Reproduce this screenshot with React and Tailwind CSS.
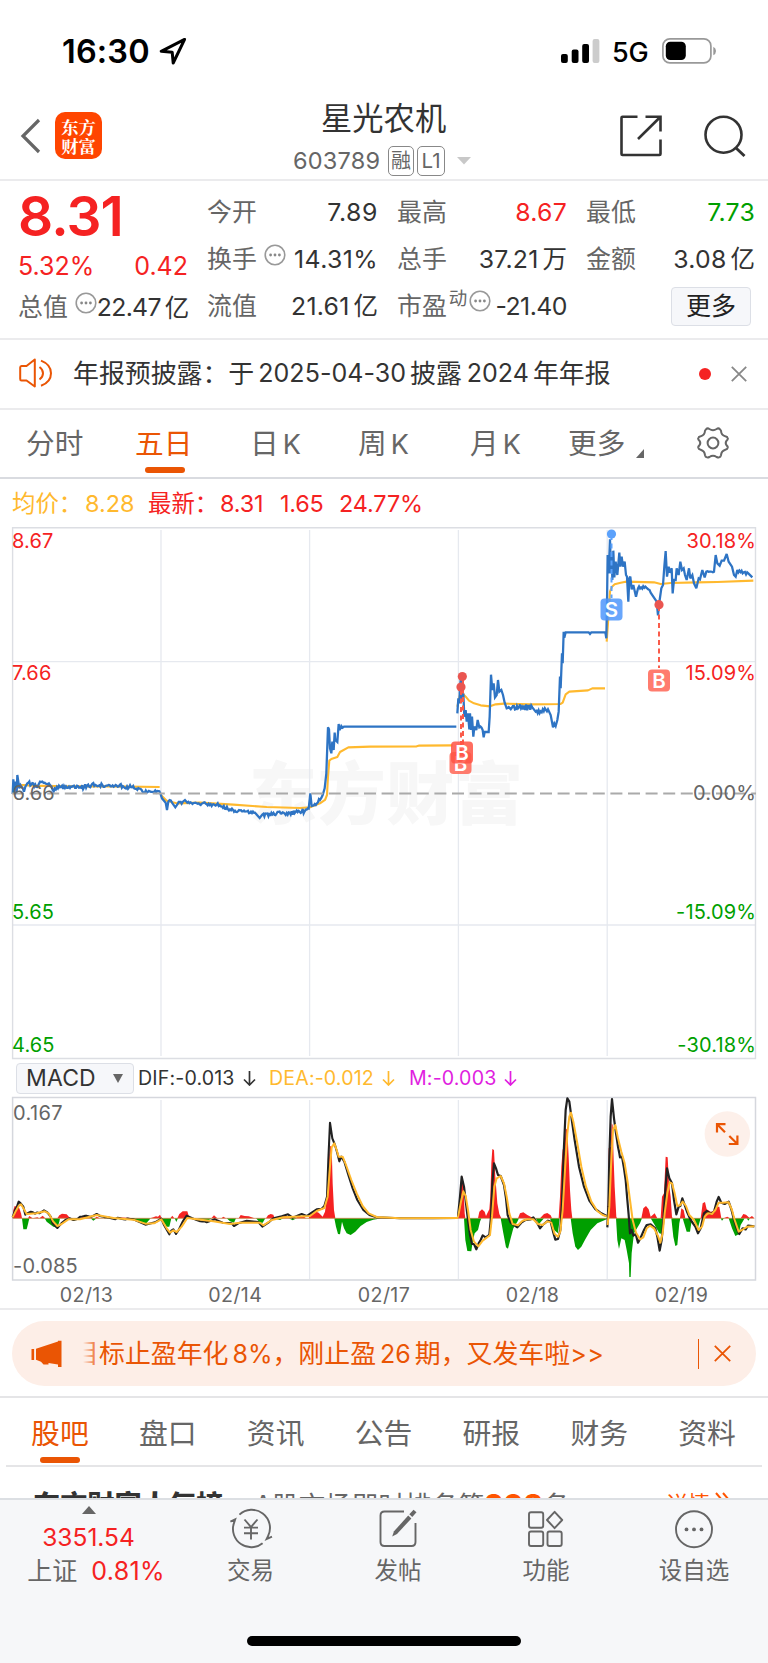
import React from "react";

const rnd = (seed) => {
  let s = seed;
  return () => {
    s = (s * 16807) % 2147483647;
    return s / 2147483647 - 0.5;
  };
};

// Adds tick noise between anchor points: each anchor is [x, y, amplitude].
const ticks = (anchors, seed, step = 3) => {
  const r = rnd(seed);
  const out = [];
  for (let i = 0; i < anchors.length - 1; i++) {
    const [x0, y0, a = 0] = anchors[i];
    const [x1, y1] = anchors[i + 1];
    out.push(`${x0},${y0}`);
    if (a > 0) {
      const n = Math.floor((x1 - x0) / step);
      for (let k = 1; k < n; k++) {
        const t = k / n;
        out.push(`${(x0 + (x1 - x0) * t).toFixed(1)},${(y0 + (y1 - y0) * t + r() * 2 * a).toFixed(1)}`);
      }
    }
  }
  const last = anchors[anchors.length - 1];
  out.push(`${last[0]},${last[1]}`);
  return out.join(" ");
};

const priceA = ticks(
  [
    [38, 402], [40, 358], [43, 400], [47, 365], [50, 398], [52, 345], [55, 365], [58, 385, 12], [72, 395], [76, 380], [82, 370, 7], [115, 375, 5], [120, 365, 2],
    [134, 368, 5], [150, 375, 5], [158, 390, 7], [180, 382, 5], [240, 382, 7], [286, 375, 5], [350, 377, 6], [415, 384, 4], [428, 396, 4], [478, 394], [481, 400],
    [486, 415], [497, 428], [501, 450], [505, 425, 6], [516, 428], [526, 442], [533, 432, 5], [548, 426], [555, 420], [562, 428, 3], [590, 430, 6], [650, 434, 5],
    [690, 448, 6], [705, 452, 4], [765, 458], [779, 474], [787, 464, 6], [860, 459, 7], [905, 456, 8], [926, 446], [931, 400], [935, 438, 8], [960, 420, 6],
    [968, 405], [974, 385], [979, 340], [984, 202], [987, 208], [990, 265], [994, 280], [997, 245], [1001, 270], [1004, 218], [1006, 240], [1012, 246], [1016, 192],
    [1019, 210], [1024, 198], [1028, 203], [1032, 200], [1369, 200],
  ],
  77, 3
);
const avgA = "38,374 100,377 200,379 330,379 479,381 M482,404 500,422 530,430 600,428 700,434 800,441 900,444 930,442 960,430 975,420 981,405 984,350 988,302 994,297 1012,291 1020,276 1045,262 1110,260 1250,259 1256,257 1358,256";
const priceB = ticks(
  [
    [220, 580], [223, 535], [226, 550], [228, 500], [231, 470], [234, 545], [238, 520], [241, 590], [245, 570], [248, 605], [252, 580], [256, 628], [258, 580],
    [261, 630], [264, 590], [268, 650], [271, 620], [277, 630], [281, 600], [286, 622, 5], [296, 630], [299, 652], [302, 636], [314, 636], [317, 590],
    [321, 464], [325, 510], [329, 490], [333, 532], [338, 525], [342, 480], [346, 515], [352, 510], [357, 525], [362, 548], [368, 565, 6], [405, 562, 10],
    [445, 562], [455, 575, 7], [470, 574, 8], [492, 568], [500, 585], [507, 622], [511, 610], [515, 618], [520, 600], [524, 575], [528, 470], [530, 505],
    [534, 400], [536, 430], [539, 335], [541, 353], [545, 337], [614, 337], [618, 342], [622, 337], [664, 337], [667, 355], [669, 250], [671, 105], [674, 160],
    [678, 58], [681, 160], [683, 95], [685, 180], [688, 92], [691, 172], [695, 125], [700, 165], [706, 98], [709, 140], [713, 110], [717, 140], [722, 125],
    [726, 165], [729, 170], [733, 245], [736, 175], [739, 170], [743, 208], [748, 195], [756, 230], [762, 205, 8], [784, 200, 7], [800, 218], [815, 240],
    [818, 245], [822, 286], [827, 240], [832, 205], [837, 195], [841, 140], [845, 93], [849, 170], [854, 140], [857, 158], [863, 145], [866, 220], [870, 180],
    [875, 180], [878, 145], [884, 165], [889, 125], [894, 150], [899, 145], [903, 165], [908, 180], [915, 145], [919, 175], [925, 165], [930, 190], [937, 205],
    [944, 175], [948, 178], [955, 150], [962, 172], [967, 155, 3], [990, 155], [995, 105], [1000, 130], [1007, 137], [1013, 122], [1020, 122], [1028, 102],
    [1034, 125], [1044, 140], [1050, 165], [1055, 170], [1060, 150, 8], [1076, 160, 5], [1093, 160], [1105, 172],
  ],
  31, 3
);
const avgB = "220,560 228,525 236,521 245,530 255,542 270,550 290,556 318,559 335,553 360,551 440,553 530,552 536,548 545,523 556,515 612,511 625,505 663,505 M668,365 674,280 678,215 684,200 692,193 710,188 725,185 810,187 830,192 860,189 940,187 1000,186 1108,182";

const difA = ticks(
  [
    [38, 502], [45, 480], [50, 472], [56, 455], [62, 460], [70, 470], [76, 494], [86, 488, 3], [118, 490], [132, 481], [142, 487], [152, 500], [158, 520], [172, 534], [184, 520],
    [196, 510], [210, 505], [220, 510, 3], [240, 500, 3], [275, 500], [290, 492], [300, 498, 2], [340, 506, 3], [400, 508], [436, 524], [465, 517], [484, 506], [492, 525], [508, 553], [514, 542], [520, 538],
    [528, 552], [536, 540], [548, 515], [560, 497], [575, 504, 3], [620, 517], [645, 508], [668, 518], [695, 520], [702, 528], [715, 520], [740, 512], [775, 516], [787, 530], [805, 518], [820, 505],
    [845, 499], [864, 493], [878, 503], [905, 492], [920, 498], [935, 488], [950, 478], [965, 476], [973, 468], [981, 440], [985, 330], [990, 218], [997, 265], [1005, 285], [1012, 310], [1018, 334], [1024, 320],
    [1033, 335], [1045, 375], [1058, 415], [1072, 450], [1090, 480], [1108, 495], [1130, 502], [1200, 505], [1300, 505], [1374, 504],
  ],
  9, 6
);
const deaA = "38,502 48,482 56,468 63,463 72,478 80,492 110,490 134,484 146,490 160,515 172,528 185,522 205,508 240,508 290,495 340,504 400,509 436,521 462,520 484,508 500,535 510,548 520,541 530,546 545,530 562,504 590,508 640,514 690,522 720,518 780,518 790,526 815,510 850,502 930,498 950,483 973,474 983,440 990,350 995,292 1003,280 1010,300 1016,320 1028,320 1038,345 1054,390 1070,430 1088,468 1106,490 1130,501 1200,505 1374,504";
const difB = "222,500 228,440 233,380 240,410 246,460 252,510 258,555 264,582 270,582 277,598 284,580 290,570 296,556 305,562 316,555 321,500 325,400 330,340 336,355 342,375 350,378 360,405 366,445 371,495 380,518 400,532 412,518 424,510 440,508 448,502 460,520 468,535 476,525 492,512 500,515 508,548 514,569 522,567 529,540 534,460 539,310 545,180 550,145 556,155 562,200 572,270 585,350 600,410 616,452 634,477 652,490 668,498 M670,532 673,470 676,320 680,200 684,147 690,205 696,250 702,290 706,310 708,322 714,320 720,355 725,390 730,450 734,495 738,550 743,540 748,557 755,552 762,578 770,563 780,540 788,525 800,523 814,535 820,560 827,602 833,570 839,500 844,420 849,355 856,385 864,400 870,450 877,493 884,470 889,468 895,445 902,465 910,488 920,510 934,530 942,550 950,535 960,490 968,483 980,492 990,485 998,455 1004,441 1012,458 1022,462 1034,455 1042,478 1050,510 1058,535 1066,552 1076,535 1085,538 1092,527 1111,529";
const deaB = "222,502 230,460 238,424 245,438 252,480 260,540 270,575 283,589 296,572 308,563 318,555 324,500 331,410 338,385 350,378 360,400 368,440 376,490 386,522 402,526 416,512 430,508 448,508 462,522 476,525 490,514 502,518 512,552 522,560 529,545 536,480 543,360 550,250 556,200 561,188 568,215 580,280 592,350 606,410 622,455 640,483 656,495 668,499 M671,525 676,470 681,350 687,240 694,225 702,265 712,305 722,340 730,390 738,450 746,510 756,548 768,568 778,562 788,535 798,527 810,535 822,558 829,578 836,550 842,490 850,430 857,397 864,400 872,430 880,468 888,466 896,455 906,468 916,495 930,510 944,540 954,530 962,500 972,490 984,492 994,480 1004,458 1016,458 1034,457 1044,480 1052,510 1064,545 1074,540 1090,530 1111,529";

const redA = [
  "38,505 40,480 44,468 52,470 58,475 63,490 66,505", "84,505 88,498 98,505 112,502 118,505 128,497 136,505", "172,505 178,496 186,491 200,493 208,502 210,505",
  "238,505 250,500 268,498 276,505", "284,505 290,500 300,505", "348,505 352,502 410,505", "450,505 460,502 468,499 474,500 480,494 485,505", "511,505 517,497 523,505",
  "532,505 538,492 548,484 562,484 567,500 572,505", "634,505 642,496 652,505", "664,505 670,500 678,505", "716,505 722,495 734,498 746,499 764,505", "798,505 804,496 812,492 820,494 824,505",
  "842,505 848,498 860,497 868,505", "888,505 894,494 902,498 912,500 918,505", "926,505 932,488 942,482 956,488 968,500 975,485 981,440 986,340 990,288 995,290 998,400 1002,480 1006,505",
];
const greenA = [
  "66,505 70,538 80,538 84,522 88,505", "134,505 140,515 152,524 160,530 172,533 178,515 180,505", "210,505 222,512 236,505", "272,505 280,512 290,505", "310,505 340,507 370,508 400,510 422,515 436,524 444,514 452,505",
  "484,505 492,518 500,530 508,530 514,505", "524,505 529,516 534,505", "590,505 620,514 636,505", "680,505 690,514 702,518 708,505", "768,505 780,518 788,518 796,505", "820,505 840,510 850,505", "866,505 878,511 890,505",
  "1003,505 1008,530 1014,552 1020,553 1026,515 1032,535 1040,550 1052,555 1066,545 1082,528 1100,516 1120,509 1145,505",
];
const redB = [
  "222,505 228,480 231,400 235,378 238,400 242,490 244,505", "282,505 286,485 294,478 302,485 306,498 310,490 316,478 319,440 322,340 325,297 330,300 334,380 340,460 346,492 352,505",
  "402,505 408,490 418,487 430,495 440,500 450,505", "468,505 480,492 490,489 500,496 504,505", "524,505 528,440 532,350 536,298 541,300 545,235 550,240 554,320 558,420 562,480 565,505",
  "670,505 673,400 674,295 680,290 683,220 686,225 689,330 692,410 697,500 699,505", "772,505 778,475 786,468 794,478 800,500 812,490 820,505", "830,505 834,440 840,430 845,320 851,322 855,400 860,440 864,500 866,505",
  "888,505 892,475 899,480 904,505", "950,505 956,460 963,456 968,478 980,485 994,484 1000,470 1006,470 1012,505", "1018,505 1030,500 1038,505", "1070,505 1078,492 1086,494 1096,503 1104,498 1111,505",
];
const greenB = [
  "240,505 244,570 250,603 262,604 266,575 272,550 282,540 288,515 292,505", "350,505 358,550 366,592 372,596 380,565 388,535 400,515 405,505", "455,505 465,522 480,505", "498,505 510,540 522,550 527,505",
  "560,505 566,550 574,590 582,600 592,590 604,568 620,540 640,520 668,508 668,505", "696,505 700,570 705,597 712,565 722,570 728,600 735,640 736,681 740,681 743,610 750,550 768,520 774,505",
  "800,505 812,525 826,550 833,552 836,505", "862,505 868,560 874,588 880,585 886,520 889,505", "896,505 908,545 918,545 924,505", "930,505 940,540 950,505", "1010,505 1014,512 1020,505",
  "1034,505 1044,535 1054,558 1064,553 1070,525 1082,505", "1088,505 1093,512 1098,505",
];

const Dots = ({ className = "" }) => (
  <svg width="22" height="22" viewBox="0 0 22 22" className={`shrink-0 ${className}`}>
    <circle cx="11" cy="11" r="9.8" fill="none" stroke="#999" strokeWidth="1.6" />
    <circle cx="6.6" cy="11" r="1.4" fill="#888" />
    <circle cx="11" cy="11" r="1.4" fill="#888" />
    <circle cx="15.4" cy="11" r="1.4" fill="#888" />
  </svg>
);

const Cell = ({ label, mark, value, unit, color = "text-[#333]", spacing = "tracking-[0.25px]" }) => (
  <div className="flex items-center justify-between whitespace-nowrap">
    <div className="flex items-center text-[24.9px] text-[#666]">
      {label}
      {mark}
    </div>
    <div className={`flex items-center text-[24.8px] ${spacing} ${color}`}>
      <span>{value}</span>
      {unit && <span className="ml-[4px] text-[24.5px] tracking-normal">{unit}</span>}
    </div>
  </div>
);

const Badge = ({ x, y, t, c }) => (
  <g>
    <rect x={x - 11} y={y - 11} width="22" height="22" rx="4" fill={c} fillOpacity="0.85" />
    <text x={x} y={y + 7.5} fontSize="20.5" fontWeight="600" textAnchor="middle" fill="#fff">{t}</text>
  </g>
);

const StatusBar = () => (
  <div className="flex h-[96px] shrink-0 items-start pl-[62px] text-black">
    <div className="mt-[29px] w-[97px] text-[32.5px] leading-[46px] font-semibold tracking-[0.15px]">16:30</div>
    <svg width="28" height="28" viewBox="0 0 28 28" className="mt-[37px]">
      <path d="M25.6 2.4 L2.2 14.3 L13.2 15.2 L14.2 26 Z" fill="none" stroke="#000" strokeWidth="3" strokeLinejoin="round" />
    </svg>
    <svg width="40" height="25" viewBox="0 0 40 25" className="mt-[39px] ml-[374px]">
      <rect x="0" y="15" width="6.8" height="9" rx="2" />
      <rect x="10.7" y="10.5" width="6.8" height="13.5" rx="2" />
      <rect x="21.2" y="5" width="6.8" height="19" rx="2" />
      <rect x="31.6" y="0" width="6.8" height="24" rx="2" fill="#ccc" />
    </svg>
    <div className="mt-[31px] ml-[11px] w-[50px] text-[27px] leading-[44px] font-medium tracking-[-0.3px]">5G</div>
    <svg width="56" height="27" viewBox="0 0 56 27" className="mt-[38px]">
      <rect x="0.9" y="0.9" width="48" height="24" rx="7" fill="none" stroke="#999" strokeWidth="1.7" />
      <rect x="3.8" y="3.8" width="20" height="18.2" rx="4.5" />
      <path d="M51.3 8.8 Q54 10 54 13 Q54 16 51.3 17.2 Z" fill="#999" />
    </svg>
  </div>
);

const Header = () => (
  <div className="flex h-[85px] shrink-0 items-start border-b-2 border-[#ebebed]">
    <svg width="22" height="40" viewBox="0 0 22 40" className="mt-[20px] ml-[20px] shrink-0">
      <path d="M19 4 L3 20 L19 36" fill="none" stroke="#666" strokeWidth="3.2" />
    </svg>
    <div className="mt-[16px] ml-[13px] flex h-[47px] w-[47px] shrink-0 flex-col items-center justify-center rounded-[10px] bg-[#ff4500] font-['Noto_Serif_CJK_SC','Noto_Sans_CJK_SC',sans-serif] text-[17.3px] leading-[19px] font-bold text-white">
      <span>东方</span>
      <span>财富</span>
    </div>
    <div className="ml-[191px] w-[180px] shrink-0">
      <div className="mt-[1px] ml-[28px] text-[31.3px] leading-[44px] text-[#333]">星光农机</div>
      <div className="mt-[5px] flex h-[30px] items-center">
        <span className="w-[95px] text-[23.5px] tracking-[0.2px] text-[#666]">603789</span>
        <span className="flex h-[30px] w-[26px] shrink-0 items-center justify-center rounded-[5px] border-[1.5px] border-[#888] text-[20px] leading-none text-[#666]">融</span>
        <span className="ml-[3px] flex h-[30px] w-[28px] shrink-0 items-center justify-center rounded-[5px] border-[1.5px] border-[#888] text-[20.5px] leading-none text-[#666]">L1</span>
        <svg width="14" height="8" viewBox="0 0 14 8" className="ml-[12px] shrink-0"><path d="M0 0H14L7 7.5Z" fill="#c8c8c8" /></svg>
      </div>
    </div>
    <svg width="44" height="44" viewBox="0 0 44 44" className="mt-[18px] ml-[146px] shrink-0">
      <path d="M18.5 2.8H3.5Q2.5 2.8 2.5 3.8V40Q2.5 41 3.5 41H40.5Q41.5 41 41.5 40V25.5M26.5 2.8H41.5V17.5M41 3.3L19 25" fill="none" stroke="#333" strokeWidth="2.6" />
    </svg>
    <svg width="46" height="46" viewBox="0 0 46 46" className="mt-[18px] ml-[40px] shrink-0">
      <circle cx="20.5" cy="20.7" r="18" fill="none" stroke="#333" strokeWidth="2.6" />
      <path d="M33 34 L41.5 42" stroke="#333" strokeWidth="3" />
    </svg>
  </div>
);

const Quote = () => (
  <div className="flex h-[159px] shrink-0 border-b-2 border-[#ebebed] pl-[18px]">
    <div className="w-[170px]">
      <div className="mt-[9px] h-[53px] text-[55px] leading-[53px] font-semibold tracking-[-0.9px] text-[#f52222]">8.31</div>
      <div className="mt-[4px] flex h-[39px] items-center justify-between text-[25px] text-[#f52222]">
        <span>5.32%</span>
        <span>0.42</span>
      </div>
      <div className="mt-[2px] grid h-[40px]">
        <Cell label="总值" mark={<Dots className="mt-[-10px] ml-[7px]" />} value="22.47" unit="亿" spacing="tracking-[-0.7px]" />
      </div>
    </div>
    <div className="mt-[8px] ml-[19px] grid h-[141px] grid-cols-[171px_170px_169px] grid-rows-3 gap-x-[19px]">
      <Cell label="今开" value="7.89" spacing="tracking-[0.6px]" />
      <Cell label="最高" value="8.67" color="text-[#f52222]" />
      <Cell label="最低" value="7.73" color="text-[#009f00]" />
      <Cell label="换手" mark={<Dots className="mt-[-9px] ml-[7px]" />} value="14.31%" spacing="tracking-[0.4px]" />
      <Cell label="总手" value="37.21" unit="万" />
      <Cell label="金额" value="3.08" unit="亿" />
      <Cell label="流值" value="21.61" unit="亿" />
      <Cell label="市盈" mark={<><span className="mt-[-16px] ml-[2px] text-[18.5px]">动</span><Dots className="mt-[-11px] ml-[2px]" /></>} value="-21.40" spacing="tracking-[-0.5px]" />
      <div className="flex items-center justify-end pr-[4px]">
        <div className="mt-[-1px] flex h-[39px] w-[80px] items-center justify-center rounded-[4px] border-[1.5px] border-[#dcdfe6] bg-[#f6f7fa] text-[25px] leading-none text-[#222]">更多</div>
      </div>
    </div>
  </div>
);

const Notice = () => (
  <div className="flex h-[70px] shrink-0 items-center border-b-2 border-[#ebebed] pl-[19px]">
    <svg width="36" height="32" viewBox="0 0 36 32" fill="none" stroke="#ea5504" strokeWidth="2" strokeLinejoin="round" className="mt-[-2px]">
      <path d="M2.5 9Q1.2 9 1.2 10.5V22Q1.2 23.5 2.5 23.5H7.5L15.8 29.5V2.5L7.5 9Z" />
      <path d="M20.5 10Q24 12.5 24 16.2Q24 20 20.5 22.5" />
      <path d="M22 3.6Q32 7.5 32 16.2Q32 25 22 28.8" />
    </svg>
    <div className="ml-[18px] flex w-[613px] items-center text-[25.9px] whitespace-nowrap text-[#333]">
      <span>年报预披露：于</span>
      <span className="ml-[4px] text-[25px] tracking-[0.05px]">2025-04-30</span>
      <span className="ml-[4px]">披露</span>
      <span className="ml-[5px] text-[25px]">2024</span>
      <span className="ml-[4px]">年年报</span>
    </div>
    <div className="mt-[-1px] ml-[13px] h-[12px] w-[12px] shrink-0 rounded-full bg-[#f52222]" />
    <svg width="16" height="16" viewBox="0 0 16 16" className="mt-[-1px] ml-[20px]"><path d="M0.8 0.8L15.2 15.2M15.2 0.8L0.8 15.2" stroke="#888" strokeWidth="1.8" /></svg>
  </div>
);

const Period = () => (
  <div className="grid h-[69px] shrink-0 grid-cols-[110px_116px_108px_111px_103px_124px_80px] border-b-2 border-[#d9dbe0] text-[28.7px] leading-[67px] text-[#666]">
    <div className="pl-[26px]">分时</div>
    <div className="flex flex-col pl-[25px] text-[#ea5504]">
      <span className="h-[57px]">五日</span>
      <span className="ml-[10px] h-[6px] w-[40px] rounded-[3px] bg-[#ea5504]" />
    </div>
    <div className="pl-[24px]">日<span className="ml-[4px] text-[27px]">K</span></div>
    <div className="pl-[24px]">周<span className="ml-[4px] text-[27px]">K</span></div>
    <div className="pl-[25px]">月<span className="ml-[4px] text-[27px]">K</span></div>
    <div className="flex pl-[20px]">更多<svg width="8" height="9" viewBox="0 0 8 9" className="mt-[39px] ml-[11px]"><path d="M8 0V9H0Z" fill="#666" /></svg></div>
    <svg width="34" height="34" viewBox="0 0 34 34" fill="none" stroke="#666" strokeWidth="2" strokeLinejoin="round" className="mt-[16px] ml-[24px]">
      <path d="M10 3.3Q11.5 1.6 13.4 3Q17 5.4 20.6 3Q22.5 1.6 24 3.3L25 4.8Q25.2 9.2 29.3 10.3Q31.6 10.8 31.8 12.5Q32 13.6 30.6 14.6Q28.8 17 30.6 19.4Q32 20.5 31.8 21.5Q31.4 23.2 29.3 23.7Q25.4 24.8 25 29.2Q24.6 31 23 31.4Q22 31.6 20.6 31Q17 28.6 13.4 31Q12 31.7 11 31.4Q9.4 31 9 29.2Q8.6 24.8 4.7 23.7Q2.6 23.2 2.2 21.5Q2 20.5 3.4 19.4Q5.2 17 3.4 14.6Q2 13.6 2.2 12.5Q2.4 10.8 4.7 10.3Q8.8 9.2 9 4.8Z" />
      <circle cx="17" cy="17" r="5.4" />
    </svg>
  </div>
);

const Chart = () => (
  <svg width="768" height="534" viewBox="0 526 768 534" className="shrink-0 font-['Inter','Noto_Sans_CJK_SC',sans-serif]">
    <g fontFamily="'Noto Sans CJK SC',sans-serif" fontWeight="900" fontSize="68" fill="#f7f7f7">
      <text x="249" y="819" textLength="274">东方财富</text>
    </g>
    <path d="M161 530V1056M309.6 530V1056M458.4 530V1056M607.2 530V1056M12 661.7H756M12 925H756" fill="none" stroke="#e6e9ef" strokeWidth="1.3" />
    <path d="M12.6 1058.5V527.7H755.5V1058.5Z" fill="none" stroke="#dcdee3" strokeWidth="1.4" />
    <g fill="none" strokeLinejoin="round">
      <g transform="translate(0 660) scale(0.33333)">
        <path d={`M${avgA}`} stroke="#ffb92e" strokeWidth="6.3" />
        <polyline points={priceA} stroke="#2e74c4" strokeWidth="6.8" strokeLinejoin="miter" strokeMiterlimit="3" />
      </g>
      <g transform="translate(384 520) scale(0.33333)">
        <path d={`M${avgB}`} stroke="#ffb92e" strokeWidth="6.3" />
        <polyline points={priceB} stroke="#2e74c4" strokeWidth="6.8" strokeLinejoin="miter" strokeMiterlimit="3" />
      </g>
    </g>
    <path d="M12 793.4H756" stroke="#aaa" strokeWidth="2" strokeDasharray="12 5.6" fill="none" />
    <g fill="none" strokeWidth="2" strokeDasharray="5 3.5" stroke="#fa5b4a">
      <path d="M461 690V752M463 680V745M659 606V668" />
      <path d="M611.5 535V598" stroke="#5ba1fb" />
    </g>
    <circle cx="462.3" cy="676.5" r="4.6" fill="#ea5550" />
    <circle cx="461" cy="687" r="4.6" fill="#ea5550" />
    <circle cx="659" cy="604.7" r="4.6" fill="#ea5550" />
    <circle cx="611.5" cy="534" r="4.6" fill="#5ba1fb" />
    <Badge x={460.5} y={763} t="B" c="#ff6555" />
    <Badge x={462} y={752.5} t="B" c="#ff5444" />
    <Badge x={659} y={680.5} t="B" c="#ff6555" />
    <Badge x={611.5} y={609.5} t="S" c="#4d97fb" />
    <g fontSize="20" letterSpacing="0.15">
      <g fill="#f52222">
        <text x="12" y="547.5">8.67</text>
        <text x="12" y="680">7.66</text>
        <text x="756" y="547.5" textAnchor="end">30.18%</text>
        <text x="756" y="680" textAnchor="end">15.09%</text>
      </g>
      <g fill="#666">
        <text x="12.5" y="800">6.66</text>
        <text x="756" y="800" textAnchor="end">0.00%</text>
      </g>
      <g fill="#009f00">
        <text x="12" y="919">5.65</text>
        <text x="12" y="1052">4.65</text>
        <text x="756" y="919" textAnchor="end">-15.09%</text>
        <text x="756" y="1052" textAnchor="end">-30.18%</text>
      </g>
    </g>
  </svg>
);

const Down = () => (
  <svg width="13" height="15" viewBox="0 0 13 15" className="ml-[8px] shrink-0" fill="none" stroke="currentColor" strokeWidth="1.7"><path d="M6.5 0V14M1 8.5L6.5 14L12 8.5" /></svg>
);

const MacdHead = () => (
  <div className="flex h-[36px] shrink-0 items-center pt-[1px] pl-[16px] text-[19.6px] tracking-[0.15px] whitespace-nowrap">
    <div className="flex h-[31px] w-[118px] items-center rounded-[4px] border-[1.5px] border-[#dcdfe6] bg-[#f6f7fa] pl-[9px] text-[23px] text-[#333]">
      <span className="w-[78px]">MACD</span>
      <svg width="10" height="9" viewBox="0 0 10 9" className="ml-[9px]"><path d="M0 0H10L5 9Z" fill="#666" /></svg>
    </div>
    <div className="ml-[4px] flex w-[131px] items-center pt-[1px] text-[#333]"><span>DIF:-0.013</span><Down /></div>
    <div className="flex w-[140px] items-center pt-[1px] text-[#ffb92e]"><span>DEA:-0.012</span><Down /></div>
    <div className="flex items-center pt-[1px] text-[#e01ee0]"><span>M:-0.003</span><Down /></div>
  </div>
);

const Macd = () => (
  <svg width="768" height="214" viewBox="0 1096 768 214" className="shrink-0 font-['Inter','Noto_Sans_CJK_SC',sans-serif]">
    <path d="M161 1100V1279M309.6 1100V1279M458.4 1100V1279M607.2 1100V1279" stroke="#e6e9ef" strokeWidth="1.3" fill="none" />
    <path d="M12.6 1097.5H755.5V1280H12.6Z" fill="none" stroke="#d5d7dd" strokeWidth="1.5" />
    <g transform="translate(0 1050) scale(0.33333)">
      {redA.map((p) => <polygon key={p} points={p} fill="#f52222" />)}
      {greenA.map((p) => <polygon key={p} points={p} fill="#009f00" />)}
      <path d="M38 505H1374" stroke="#c9854a" strokeWidth="2.5" />
      <polyline points={difA} fill="none" stroke="#222" strokeWidth="6.2" strokeLinejoin="round" />
      <path d={`M${deaA}`} fill="none" stroke="#ffb92e" strokeWidth="6" strokeLinejoin="round" />
    </g>
    <g transform="translate(384 1050) scale(0.33333)">
      {redB.map((p) => <polygon key={p} points={p} fill="#f52222" />)}
      {greenB.map((p) => <polygon key={p} points={p} fill="#009f00" />)}
      <path d="M222 505H1111" stroke="#c9854a" strokeWidth="2" />
      <path d={`M${difB}`} fill="none" stroke="#222" strokeWidth="6.6" strokeLinejoin="round" />
      <path d={`M${deaB}`} fill="none" stroke="#ffb92e" strokeWidth="6" strokeLinejoin="round" />
    </g>
    <circle cx="727.3" cy="1134" r="22.7" fill="#fdf0ea" />
    <path d="M717 1132.5V1124.2H725.5M717.3 1124.5L725 1132.3M737.4 1135.5V1144H728.8M737.2 1143.8L729.3 1136" fill="none" stroke="#ea5504" strokeWidth="2.2" />
    <g fill="#666" fontSize="19.6">
      <text x="13" y="1119.5" letterSpacing="0.4" fontSize="20">0.167</text>
      <text x="13" y="1273" letterSpacing="0.2" fontSize="20">-0.085</text>
      <g textAnchor="middle" letterSpacing="0.4">
        <text x="86.5" y="1302">02/13</text>
        <text x="235.3" y="1302">02/14</text>
        <text x="384" y="1302">02/17</text>
        <text x="532.5" y="1302">02/18</text>
        <text x="681.5" y="1302">02/19</text>
      </g>
    </g>
    <path d="M0 1309H768" stroke="#ebebed" strokeWidth="2" />
  </svg>
);

const Banner = () => (
  <div className="h-[88px] shrink-0 border-b-2 border-[#e5e5e7] px-[12px] pt-[11px]">
    <div className="flex h-[65px] items-center rounded-full bg-[#fdeee7] pl-[19px] text-[#ea5504]">
      <svg width="32" height="28" viewBox="0 0 32 28" fill="#ea5504" className="shrink-0">
        <rect x="0.5" y="9" width="2.6" height="11" />
        <path d="M5 8.8L27 1.5V0.8H30.5V27H27V24.6L17.5 23V24.5H12.5L10 21.8L5 19.8Z" />
      </svg>
      <div className="mt-[2px] ml-[16px] flex w-[617px] shrink-0 items-center text-[25.9px] whitespace-nowrap">
        <span className="relative flex w-[20px] justify-end overflow-hidden">目<span className="absolute inset-0 bg-linear-to-r from-[#fdeee7] from-20% to-transparent" /></span>
        <span>标止盈年化</span>
        <span className="ml-[4px] text-[25px]">8%</span>
        <span>，刚止盈</span>
        <span className="ml-[4px] text-[25px]">26</span>
        <span className="ml-[4px]">期，又发车啦</span>
        <span className="text-[25px] tracking-[0.5px]">&gt;&gt;</span>
      </div>
      <div className="ml-[2px] h-[30px] w-px bg-[#ea5504]" />
      <svg width="17" height="17" viewBox="0 0 17 17" className="ml-[15px]"><path d="M0.8 0.8L16.2 16.2M16.2 0.8L0.8 16.2" stroke="#ea5504" strokeWidth="1.8" /></svg>
    </div>
  </div>
);

const Sections = () => (
  <div className="mx-[6px] grid h-[69px] shrink-0 grid-cols-7 border-b-2 border-[#e5e5e7] pr-[1px] text-center text-[28.8px] leading-[71px] text-[#666]">
    {["股吧", "盘口", "资讯", "公告", "研报", "财务", "资料"].map((t, i) => (
      <div key={t} className={i === 0 ? "flex flex-col items-center text-[#ea5504]" : ""}>
        {i === 0 ? <span className="h-[59px]">{t}</span> : t}
        {i === 0 && <span className="h-[6px] w-[40px] rounded-[3px] bg-[#ea5504]" />}
      </div>
    ))}
  </div>
);

const Item = ({ label, children }) => (
  <div className="flex flex-col items-center">
    <svg width="44" height="44" viewBox="0 0 44 44" fill="none" stroke="#666" strokeWidth="1.9" className="mt-[7px]">{children}</svg>
    <span className="mt-[2px] text-[23.5px] leading-[35px]">{label}</span>
  </div>
);

const BottomBar = () => (
  <div className="h-[165px] shrink-0 border-t-2 border-[#dcdfe3] bg-[#f6f7f9]">
    <div className="grid h-[136px] grid-cols-[177px_147px_148px_148px_148px] text-[#666]">
      <div className="flex flex-col items-center">
        <svg width="14" height="8" viewBox="0 0 14 8" className="mt-[6px]"><path d="M0 8H14L7 0Z" fill="#666" /></svg>
        <span className="mt-[7px] text-[24.5px] leading-[32px] text-[#f52222]">3351.54</span>
        <div className="ml-[15px] flex items-center text-[25px] leading-[36px]">
          <span>上证</span>
          <span className="ml-[14px] text-[25px] tracking-[0.3px] text-[#f52222]">0.81%</span>
        </div>
      </div>
      <Item label="交易">
        <path d="M10.4 7.6A18.2 18.2 0 0 1 39 29.2L37.6 32L43 29.6M33.6 36.2A18.2 18.2 0 0 1 4.8 16.6L6.2 12.4L1.4 14.6" />
        <path d="M15.5 12.5L22 20L28.5 12.5M22 20V32.5M15 20.6H29M15 26.3H29" />
      </Item>
      <Item label="发帖">
        <path d="M28 4.5H8.5Q4.5 4.5 4.5 8.5V35Q4.5 39 8.5 39H35.5Q39.5 39 39.5 35V16" />
        <path d="M32.2 8.6L35.4 11.4L21 27L16.2 29.5L18 24.3Z" fill="#666" stroke="none" />
        <path d="M34.8 8.6L39 4" strokeWidth="4" />
      </Item>
      <Item label="功能">
        <rect x="5" y="5.3" width="14.2" height="15.4" rx="2" />
        <rect x="5" y="24.5" width="14.2" height="14.5" rx="2" />
        <rect x="23.5" y="24.5" width="14.2" height="14.5" rx="2" />
        <path d="M30.6 4.8L38.2 13L30.6 21.2L23 13Z" strokeLinejoin="round" />
      </Item>
      <Item label="设自选">
        <circle cx="22" cy="22.2" r="18" />
        <g fill="#666" stroke="none"><circle cx="14.5" cy="22.4" r="1.9" /><circle cx="22" cy="22.4" r="1.9" /><circle cx="29.5" cy="22.4" r="1.9" /></g>
      </Item>
    </div>
    <div className="mx-auto h-[10px] w-[274px] rounded-full bg-black" />
  </div>
);

export default function App() {
  return (
    <div className="flex h-[1663px] w-[768px] flex-col overflow-hidden bg-white font-['Inter','Noto_Sans_CJK_SC',sans-serif]">
      <StatusBar />
      <Header />
      <Quote />
      <Notice />
      <Period />
      <div className="flex h-[47px] shrink-0 items-center pt-[3px] pl-[12px] text-[23.4px] whitespace-nowrap text-[#f52222]">
        <span className="w-[73px] text-[#ffb92e]">均价：</span>
        <span className="w-[63px] text-[#ffb92e]">8.28</span>
        <span className="w-[72px]">最新：</span>
        <span className="w-[60px] tracking-[-0.2px]">8.31</span>
        <span className="w-[59px] tracking-[-0.2px]">1.65</span>
        <span className="tracking-[-0.1px]">24.77%</span>
      </div>
      <Chart />
      <MacdHead />
      <Macd />
      <Banner />
      <Sections />
      <div className="flex h-[31px] shrink-0 items-start overflow-hidden pt-[20px] pl-[33px] leading-[38px] whitespace-nowrap">
        <span className="w-[221px] text-[27.2px] font-black text-[#333]">东方财富人气榜</span>
        <span className="mt-[-1px] w-[412px] text-[26.5px] text-[#666]">A股市场即时排名第<b className="text-[29px] font-extrabold text-[#ff5500]">308</b>名</span>
        <span className="mt-[-2px] text-[22px] text-[#ff5500]">详情</span>
        <svg width="16" height="16" viewBox="0 0 16 16" className="mt-[5px] ml-[5px]" fill="none" stroke="#ff5500" strokeWidth="2"><path d="M1 1L7 8L1 15M8 1L14 8L8 15" /></svg>
      </div>
      <BottomBar />
    </div>
  );
}
